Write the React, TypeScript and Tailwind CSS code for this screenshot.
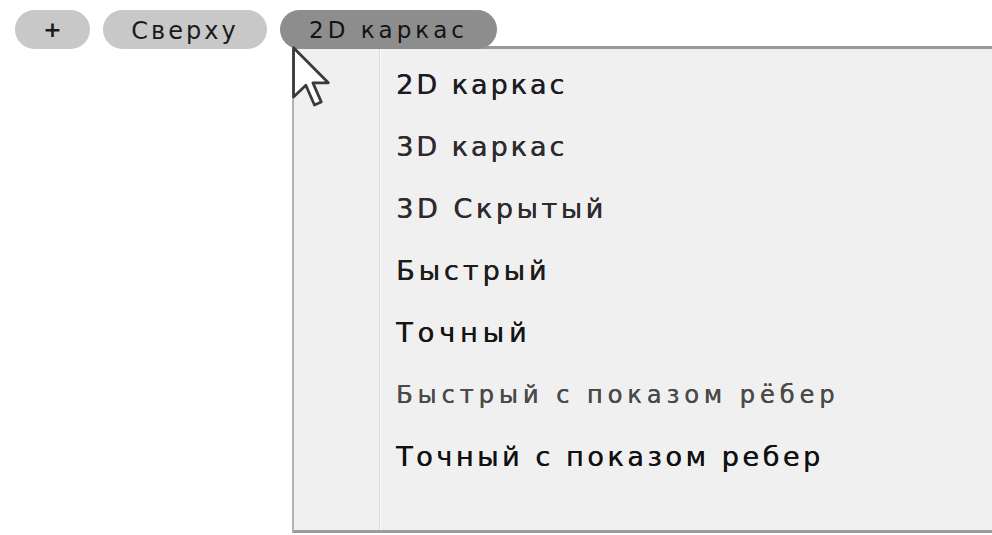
import React from "react";

const items: { label: string; cls: string }[] = [
  { label: "2D каркас", cls: "text-[27px] tracking-[3px] text-[#1c1c24]" },
  { label: "3D каркас", cls: "text-[27px] tracking-[3px] text-[#2e2a2e]" },
  { label: "3D Скрытый", cls: "text-[27px] tracking-[3.6px] text-[#2e2a2e]" },
  { label: "Быстрый", cls: "text-[27px] tracking-[4px] text-[#1c1c1c]" },
  { label: "Точный", cls: "text-[27px] tracking-[5px] text-[#151515]" },
  { label: "Быстрый с показом рёбер", cls: "text-[24px] tracking-[5px] text-[#4a4a4a]" },
  { label: "Точный с показом ребер", cls: "text-[27px] tracking-[3.6px] text-[#111111]" },
];

function Cursor() {
  return (
    <svg
      width="40"
      height="62"
      viewBox="-0.5 -0.5 13 20"
      className="absolute left-[292px] top-[46px] z-20"
    >
      <polygon
        points="0,0 0,16 4,12.2 6.8,18.6 9,17.6 6.3,11.4 11.3,11.4"
        fill="#ffffff"
        stroke="#3a3a3a"
        strokeWidth="0.9"
        strokeLinejoin="round"
      />
    </svg>
  );
}

export default function App() {
  return (
    <div className="relative w-[992px] h-[535px] overflow-hidden bg-white font-['DejaVu_Sans',sans-serif]">
      {/* viewport controls */}
      <div className="relative z-10 flex items-center gap-[13px] pl-[15px] pt-[10px]">
        <div className="flex h-[39px] w-[75px] items-center justify-center rounded-full bg-[#c8c8c8] text-[22px] font-bold text-[#1a1a1a]">
          +
        </div>
        <div className="flex h-[39px] w-[164px] items-center justify-center rounded-full bg-[#c8c8c8] pt-[2px] text-[24px] tracking-[3px] text-[#1a1a1a]">
          Сверху
        </div>
        <div className="flex h-[39px] w-[217px] items-center justify-center rounded-full bg-[#8d8d8d] pt-[2px] text-[23px] tracking-[4px] text-[#141414]">
          2D каркас
        </div>
      </div>

      {/* visual style menu */}
      <div className="absolute left-[292px] top-[46px] flex h-[487px] w-[720px] border-t-[3px] border-l-2 border-b-[3px] border-t-[#9a9a9a] border-l-[#b4b4b4] border-b-[#9c9c9c] bg-[#f0f0f0]">
        <div className="w-[86px] shrink-0 border-r border-r-[#d6d6d6]" />
        <div className="w-px shrink-0 bg-white" />
        <div className="flex flex-col pl-[15px] pt-[5px] [text-shadow:0.4px_0_0_currentColor]">
          {items.map((it) => (
            <div key={it.label} className={`flex h-[62px] items-center ${it.cls}`}>
              {it.label}
            </div>
          ))}
        </div>
      </div>

      <Cursor />
    </div>
  );
}
